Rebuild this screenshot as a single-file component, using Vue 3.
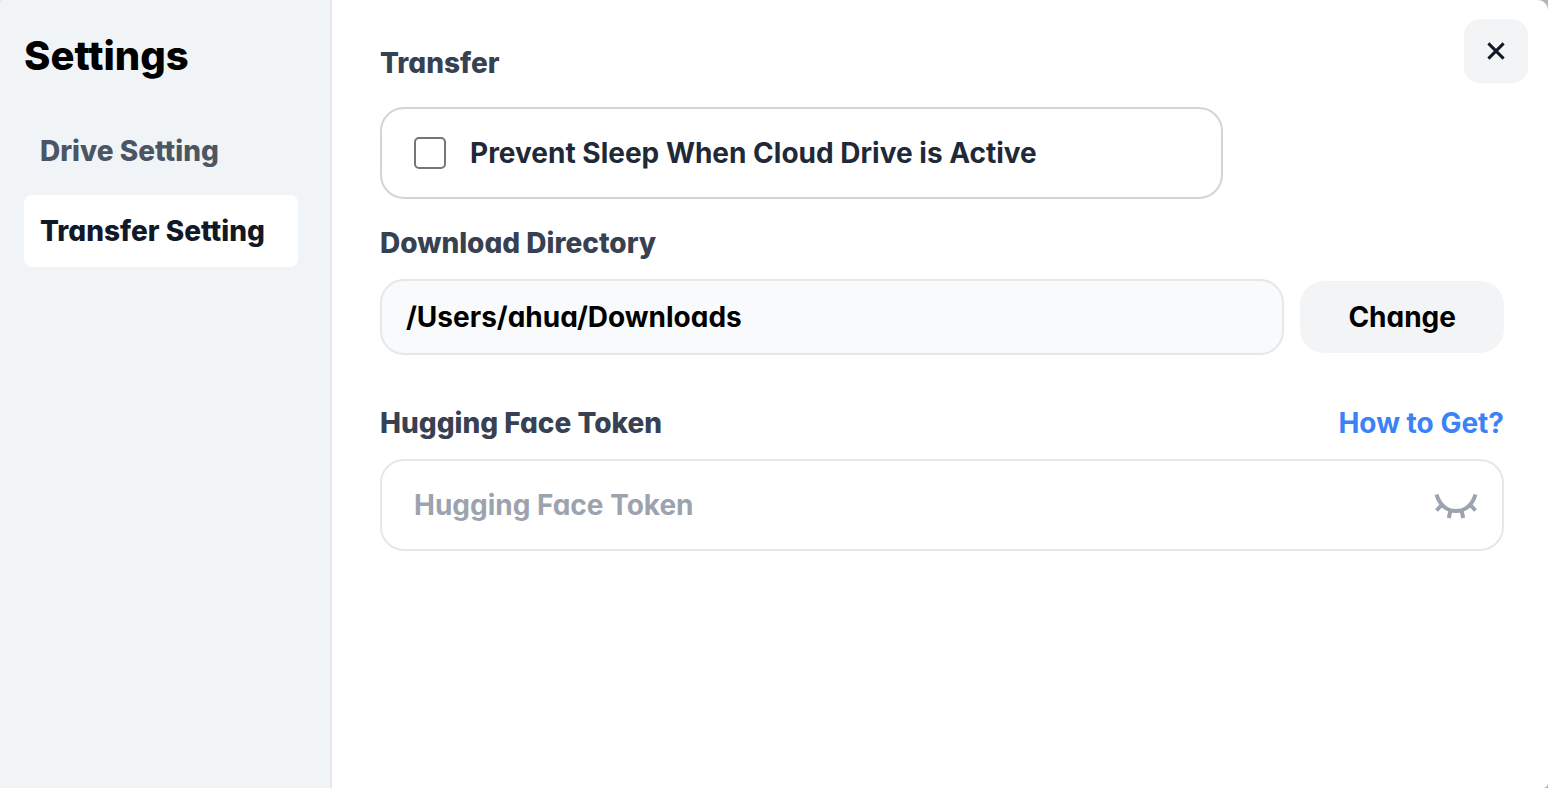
<script setup>
import { ref } from 'vue'

const tabs = ['Drive Setting', 'Transfer Setting']
const activeTab = ref('Transfer Setting')
const preventSleep = ref(false)
const directory = ref('/Users/ahua/Downloads')
const token = ref('')
const showToken = ref(false)
</script>

<template>
  <div class="window">
    <aside class="sidebar">
      <h1 class="title">Settings</h1>
      <nav class="nav">
        <button
          v-for="tab in tabs"
          :key="tab"
          type="button"
          class="nav-item"
          :class="{ active: tab === activeTab }"
          @click="activeTab = tab"
        >{{ tab }}</button>
      </nav>
    </aside>

    <main class="content">
      <button type="button" class="close" aria-label="Close">
        <svg width="20" height="20" viewBox="0 0 20 20" fill="none" stroke="currentColor" stroke-width="3">
          <path d="M2.4 2.4 17.6 17.6M17.6 2.4 2.4 17.6" />
        </svg>
      </button>

      <h2 class="heading">Transfer</h2>
      <label class="option">
        <input v-model="preventSleep" type="checkbox" class="check" />
        <span>Prevent Sleep When Cloud Drive is Active</span>
      </label>

      <label class="heading" for="directory">Download Directory</label>
      <div class="row">
        <input id="directory" v-model="directory" type="text" class="directory" readonly />
        <button type="button" class="change">Change</button>
      </div>

      <div class="token-head">
        <label class="heading" for="token">Hugging Face Token</label>
        <a href="#" class="help">How to Get?</a>
      </div>
      <div class="token-box">
        <input
          id="token"
          v-model="token"
          :type="showToken ? 'text' : 'password'"
          class="token"
          placeholder="Hugging Face Token"
        />
        <button type="button" class="eye" aria-label="Toggle token visibility" @click="showToken = !showToken">
          <svg width="44" height="28" viewBox="0 0 44 28" fill="none" stroke="currentColor" stroke-width="4">
            <path d="M2.500 3.500C5.500 14 13 20 22 20S38.500 14 41.500 3.500" />
            <path d="M8 13.500 2.500 19.500M16.500 19 14.800 27M27.500 19 29.200 27M36 13.500 41.500 19.500" />
          </svg>
        </button>
      </div>
    </main>
  </div>
</template>

<style>
body {
  background: #b4b4b8;
}
</style>

<style scoped>
.window {
  display: flex;
  min-height: 100vh;
  overflow: hidden;
  border-radius: 2px 10px 5px 0;
  background: #fff;
  color: #000;
  font-family: Inter, "Liberation Sans", sans-serif;
  font-feature-settings: "cv11";
  font-size: 28px;
  font-weight: 700;
  line-height: 40px;
}

.window * {
  box-sizing: border-box;
}

button,
input {
  margin: 0;
  border: 0;
  font: inherit;
  font-feature-settings: inherit;
  color: inherit;
}

button {
  cursor: pointer;
}

.sidebar {
  flex: none;
  width: 332px;
  padding: 32px 32px 32px 24px;
  border-right: 2px solid #e5e7eb;
  background: #f0f4f7;
}

.title {
  margin: 0 0 35px;
  font-size: 40px;
  font-weight: 800;
  line-height: 48px;
}

.nav {
  display: flex;
  flex-direction: column;
  gap: 8px;
}

.nav-item {
  padding: 16px;
  border-radius: 8px;
  background: transparent;
  color: #4b5563;
  font-weight: 800;
  text-align: left;
  white-space: nowrap;
}

.nav-item.active {
  background: #fff;
  color: #111827;
}

.content {
  position: relative;
  display: flex;
  flex: 1;
  flex-direction: column;
  min-width: 0;
  padding: 43px 44px 43px 48px;
}

.close {
  position: absolute;
  top: 19px;
  right: 20px;
  display: flex;
  align-items: center;
  justify-content: center;
  width: 64px;
  height: 64px;
  padding: 0;
  border-radius: 16px;
  background: #f3f4f6;
  color: #111827;
}

.heading {
  margin: 0;
  color: #374151;
  font-size: 28px;
  font-weight: 800;
}

.option {
  display: flex;
  align-items: center;
  gap: 24px;
  width: 75%;
  margin: 24px 0;
  padding: 24px 32px;
  border: 2px solid #d1d5db;
  border-radius: 24px;
  color: #1f2937;
}

.check {
  flex: none;
  width: 32px;
  height: 32px;
  border: 2px solid #767676;
  border-radius: 5px;
  background: #fff;
  appearance: none;
}

.check:checked {
  background: #3b82f6;
  border-color: #3b82f6;
}

.row {
  display: flex;
  align-items: center;
  gap: 16px;
  margin: 16px 0 48px;
}

.directory {
  flex: 1;
  min-width: 0;
  padding: 16px 24px;
  height: 76px;
  border: 2px solid #e5e7eb;
  border-radius: 24px;
  background: #f9fafb;
}

.change {
  padding: 16px 48px;
  border-radius: 24px;
  background: #f3f4f6;
}

.token-head {
  display: flex;
  justify-content: space-between;
}

.help {
  color: #3b82f6;
  text-decoration: none;
}

.token-box {
  display: flex;
  align-items: center;
  margin-top: 16px;
  padding: 24px 24px 24px 32px;
  border: 2px solid #e5e7eb;
  border-radius: 24px;
}

.token {
  flex: 1;
  min-width: 0;
  height: 40px;
  padding: 0;
  background: transparent;
  outline: none;
}

.token::placeholder {
  color: #9ca3af;
  opacity: 1;
}

.eye {
  display: flex;
  padding: 0;
  background: transparent;
  color: #9ca3af;
}
</style>
